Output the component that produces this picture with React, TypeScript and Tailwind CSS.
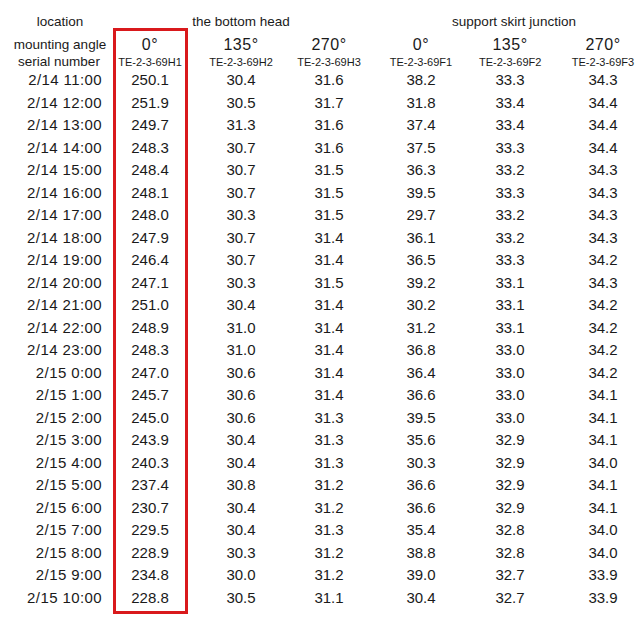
const rows: string[][] = [
  ['2/14 11:00', '250.1', '30.4', '31.6', '38.2', '33.3', '34.3'],
  ['2/14 12:00', '251.9', '30.5', '31.7', '31.8', '33.4', '34.4'],
  ['2/14 13:00', '249.7', '31.3', '31.6', '37.4', '33.4', '34.4'],
  ['2/14 14:00', '248.3', '30.7', '31.6', '37.5', '33.3', '34.4'],
  ['2/14 15:00', '248.4', '30.7', '31.5', '36.3', '33.2', '34.3'],
  ['2/14 16:00', '248.1', '30.7', '31.5', '39.5', '33.3', '34.3'],
  ['2/14 17:00', '248.0', '30.3', '31.5', '29.7', '33.2', '34.3'],
  ['2/14 18:00', '247.9', '30.7', '31.4', '36.1', '33.2', '34.3'],
  ['2/14 19:00', '246.4', '30.7', '31.4', '36.5', '33.3', '34.2'],
  ['2/14 20:00', '247.1', '30.3', '31.5', '39.2', '33.1', '34.3'],
  ['2/14 21:00', '251.0', '30.4', '31.4', '30.2', '33.1', '34.2'],
  ['2/14 22:00', '248.9', '31.0', '31.4', '31.2', '33.1', '34.2'],
  ['2/14 23:00', '248.3', '31.0', '31.4', '36.8', '33.0', '34.2'],
  ['2/15 0:00', '247.0', '30.6', '31.4', '36.4', '33.0', '34.2'],
  ['2/15 1:00', '245.7', '30.6', '31.4', '36.6', '33.0', '34.1'],
  ['2/15 2:00', '245.0', '30.6', '31.3', '39.5', '33.0', '34.1'],
  ['2/15 3:00', '243.9', '30.4', '31.3', '35.6', '32.9', '34.1'],
  ['2/15 4:00', '240.3', '30.4', '31.3', '30.3', '32.9', '34.0'],
  ['2/15 5:00', '237.4', '30.8', '31.2', '36.6', '32.9', '34.1'],
  ['2/15 6:00', '230.7', '30.4', '31.2', '36.6', '32.9', '34.1'],
  ['2/15 7:00', '229.5', '30.4', '31.3', '35.4', '32.8', '34.0'],
  ['2/15 8:00', '228.9', '30.3', '31.2', '38.8', '32.8', '34.0'],
  ['2/15 9:00', '234.8', '30.0', '31.2', '39.0', '32.7', '33.9'],
  ['2/15 10:00', '228.8', '30.5', '31.1', '30.4', '32.7', '33.9'],
];

const angles = ['0°', '135°', '270°', '0°', '135°', '270°'];
const serials = ['TE-2-3-69H1', 'TE-2-3-69H2', 'TE-2-3-69H3', 'TE-2-3-69F1', 'TE-2-3-69F2', 'TE-2-3-69F3'];

// column widths chosen so each column's centre lands where the reference has it
const grid = 'grid grid-cols-[113px_74px_108px_68px_116px_62px_124px]';

export default function App() {
  return (
    <div
      className="relative w-[638px] h-[622px] overflow-hidden bg-white text-[#1a1a1a] pt-[12px]"
      style={{ fontFamily: '"Liberation Sans", Arial, sans-serif' }}
    >
      {/* highlight frame around the first column */}
      <div className="absolute left-[113px] top-[28px] w-[75px] h-[586px] border-[3px] border-[#d9191c] pointer-events-none" />

      <div className={`${grid} h-[21px] items-center text-[13.5px] whitespace-nowrap`}>
        <div className="text-center pl-[7px]">location</div>
        <div />
        <div className="text-center">the bottom head</div>
        <div />
        <div className="col-span-3 text-center">support skirt junction</div>
      </div>

      <div className={`${grid} h-[19px] items-center whitespace-nowrap`}>
        <div className="text-center pl-[7px] text-[13.5px]">mounting angle</div>
        {angles.map((a, i) => (
          <div key={i} className="text-center text-[16px] tracking-[0.5px]">{a}</div>
        ))}
      </div>

      <div className={`${grid} h-[17px] items-center whitespace-nowrap`}>
        <div className="text-center pl-[5px] text-[13.5px]">serial number</div>
        {serials.map((s) => (
          <div key={s} className="text-center text-[11px]">{s}</div>
        ))}
      </div>

      {rows.map((r) => (
        <div key={r[0]} className={`${grid} h-[22.5px] items-center text-[15px] whitespace-nowrap`}>
          <div className="text-right pr-[11px] tracking-[0.4px]">{r[0]}</div>
          {r.slice(1).map((v, i) => (
            <div key={i} className="text-center">{v}</div>
          ))}
        </div>
      ))}
    </div>
  );
}
